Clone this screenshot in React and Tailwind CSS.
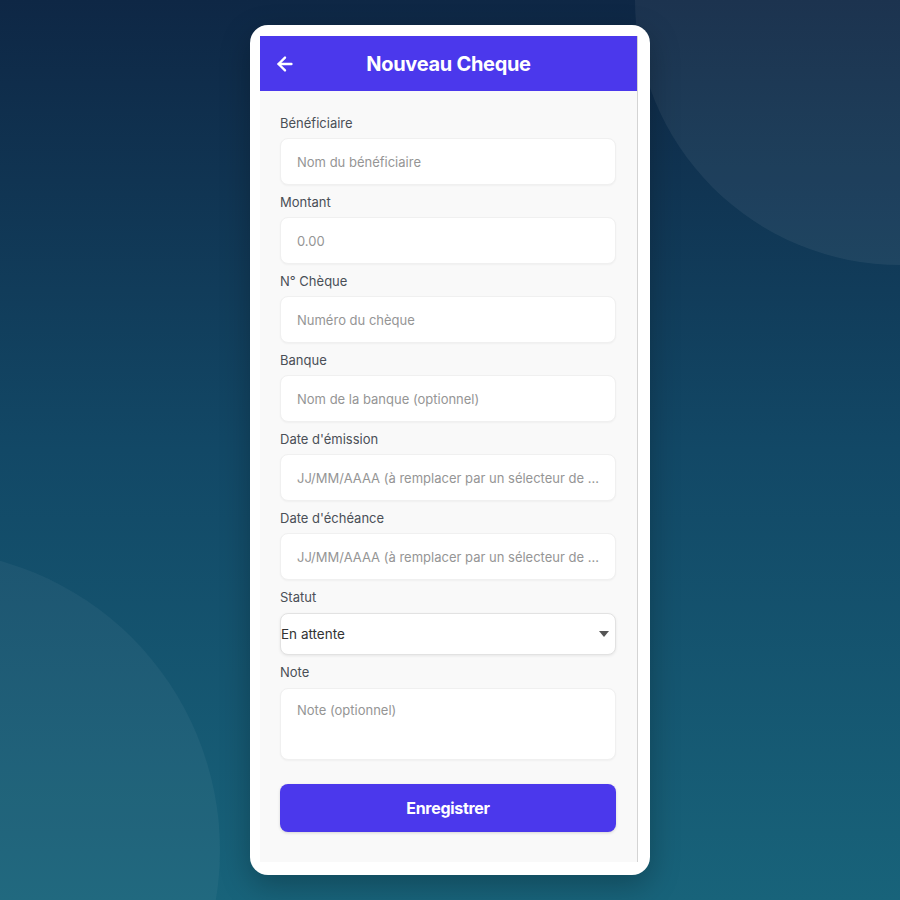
import { ArrowLeft } from 'lucide-react'

const fields = [
  { label: 'Bénéficiaire', placeholder: 'Nom du bénéficiaire' },
  { label: 'Montant', placeholder: '0.00' },
  { label: 'N° Chèque', placeholder: 'Numéro du chèque' },
  { label: 'Banque', placeholder: 'Nom de la banque (optionnel)' },
  { label: "Date d'émission", placeholder: 'JJ/MM/AAAA (à remplacer par un sélecteur de date)' },
  { label: "Date d'échéance", placeholder: 'JJ/MM/AAAA (à remplacer par un sélecteur de date)' },
]

function Field({ label, placeholder }) {
  return (
    <div className="flex flex-col">
      <label className="h-[18px] text-[13px] leading-[18px] text-[#4a4f57]">{label}</label>
      <input
        type="text"
        placeholder={placeholder}
        className="mt-[6px] mb-[8px] h-[47px] w-full truncate rounded-lg border border-[#f0f0f0] bg-white px-4 text-[13px] text-gray-800 shadow-[0_1px_2px_rgba(0,0,0,0.04)] outline-none placeholder:text-[#959595]"
      />
    </div>
  )
}

export default function App() {
  return (
    <div
      className="relative h-[900px] w-full overflow-hidden bg-gradient-to-b from-[#0e2745] via-[#124866] to-[#18637a]"
      style={{ fontFamily: 'Inter, "Noto Sans", sans-serif' }}
    >
      {/* decorative circles */}
      <div className="absolute left-[635px] top-[-265px] h-[530px] w-[530px] rounded-full bg-white/[0.06]" />
      <div className="absolute left-[-380px] top-[550px] h-[600px] w-[600px] rounded-full bg-white/[0.045]" />

      <div className="relative mx-auto mt-[25px] flex h-[850px] w-[400px] flex-col rounded-[18px] bg-white pb-[13px] pl-[10px] pr-[12px] pt-[11px] shadow-[0_10px_30px_rgba(0,0,0,0.25)]">
        <div className="flex flex-1 flex-col overflow-hidden border-r border-[#d4d4d4] bg-[#f9f9f9]">
          <div className="relative flex h-[55px] items-center justify-center bg-[#4b38ec]">
            <ArrowLeft className="absolute left-[14px] text-white" size={22} strokeWidth={2.6} />
            <h1 className="text-[20px] font-bold tracking-[-0.3px] text-white">Nouveau Cheque</h1>
          </div>

          <div className="flex flex-col pl-[20px] pr-[21px] pt-[23px]">
            {fields.map((f) => (
              <Field key={f.label} {...f} />
            ))}

            <label className="h-[18px] text-[13px] leading-[18px] text-[#4a4f57]">Statut</label>
            <div className="mb-[8px] mt-[7px] flex h-[42px] items-center justify-between rounded-lg border border-[#e2e2e2] bg-white pr-[6px] shadow-[0_1px_3px_rgba(0,0,0,0.08)]">
              <span className="text-[13.5px] text-[#333]">En attente</span>
              <svg width="10" height="6" viewBox="0 0 10 6">
                <path d="M0 0 L10 0 L5 6 Z" fill="#555" />
              </svg>
            </div>

            <label className="h-[18px] text-[13px] leading-[18px] text-[#4a4f57]">Note</label>
            <textarea
              placeholder="Note (optionnel)"
              className="mt-[7px] h-[72px] w-full resize-none rounded-lg border border-[#f0f0f0] bg-white px-4 pt-[12px] text-[13px] text-gray-800 shadow-[0_1px_2px_rgba(0,0,0,0.04)] outline-none placeholder:text-[#959595]"
            />

            <button className="mt-[24px] h-[48px] w-full rounded-lg bg-[#4b38ec] text-[16px] font-bold tracking-[-0.3px] text-white shadow-[0_1px_3px_rgba(0,0,0,0.15)]">
              Enregistrer
            </button>
          </div>
        </div>
      </div>
    </div>
  )
}
